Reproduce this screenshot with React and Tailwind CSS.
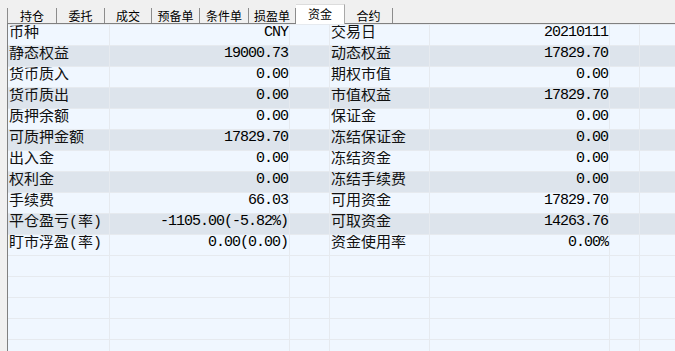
import React from "react";

const left = [
  ["币种", "CNY"],
  ["静态权益", "19000.73"],
  ["货币质入", "0.00"],
  ["货币质出", "0.00"],
  ["质押余额", "0.00"],
  ["可质押金额", "17829.70"],
  ["出入金", "0.00"],
  ["权利金", "0.00"],
  ["手续费", "66.03"],
  ["平仓盈亏(率)", "-1105.00(-5.82%)"],
  ["盯市浮盈(率)", "0.00(0.00)"],
];
const right = [
  ["交易日", "20210111"],
  ["动态权益", "17829.70"],
  ["期权市值", "0.00"],
  ["市值权益", "17829.70"],
  ["保证金", "0.00"],
  ["冻结保证金", "0.00"],
  ["冻结资金", "0.00"],
  ["冻结手续费", "0.00"],
  ["可用资金", "17829.70"],
  ["可取资金", "14263.76"],
  ["资金使用率", "0.00%"],
];

const tabs = [
  { t: "持仓", w: "w-[50px] border-l" },
  { t: "委托", w: "w-[48px]" },
  { t: "成交", w: "w-[47px]" },
  { t: "预备单", w: "w-[48px]" },
  { t: "条件单", w: "w-[49px]" },
  { t: "损盈单", w: "w-[47px]" },
  { t: "资金", w: "w-[49px]", active: true },
  { t: "合约", w: "w-[48px]" },
];

const labelFont = { fontFamily: '"Liberation Mono","Noto Sans CJK SC",monospace' };
const numFont = { fontFamily: '"Liberation Mono","Noto Sans CJK SC",monospace' };

function Row({ i, l, r }) {
  const bg = i % 2 === 1 && l ? "bg-[#dde4ec]" : "bg-[#f0f7ff]";
  return (
    <div className={`flex h-[21px] shrink-0 border-t border-[#e6eaef] ${bg}`}>
      <div
        className="w-[102px] shrink-0 border-r border-[#e6eaef] pl-[1px] text-[15px] leading-[17px] text-[#111] whitespace-nowrap overflow-hidden"
        style={labelFont}
      >
        {l ? l[0] : ""}
      </div>
      <div
        className="w-[180px] shrink-0 border-r border-[#e6eaef] pr-[1px] text-right text-[15px] leading-[16px] tracking-[-1px] text-black whitespace-nowrap"
        style={numFont}
      >
        {l ? l[1] : ""}
      </div>
      <div className="w-[40px] shrink-0 border-r border-[#e6eaef]" />
      <div
        className="w-[100px] shrink-0 border-r border-[#e6eaef] pl-[1px] text-[15px] leading-[17px] text-[#111] whitespace-nowrap overflow-hidden"
        style={labelFont}
      >
        {r ? r[0] : ""}
      </div>
      <div
        className="w-[180px] shrink-0 border-r border-[#e6eaef] pr-[1px] text-right text-[15px] leading-[16px] tracking-[-1px] text-black whitespace-nowrap"
        style={numFont}
      >
        {r ? r[1] : ""}
      </div>
      <div className="w-[30px] shrink-0 border-r border-[#e6eaef]" />
      <div className="flex-1" />
    </div>
  );
}

export default function App() {
  const empties = [0, 1, 2, 3, 4];
  return (
    <div className="w-[675px] h-[351px] overflow-hidden bg-[#f0f0f0] flex flex-col">
      <div className="h-[24px] shrink-0 ml-[7px] flex items-end border-b border-[#808080]">
        {tabs.map((tb) =>
          tb.active ? (
            <div
              key={tb.t}
              className={`${tb.w} h-[20px] -mb-px bg-white border-t border-r border-[#a8a8a8] border-t-[#dcdcdc] flex items-center justify-center text-[12px] text-black`}
              style={{ fontFamily: '"Noto Sans CJK SC",sans-serif' }}
            >
              <span className="leading-[14px] -mt-[1px]">{tb.t}</span>
            </div>
          ) : (
            <div
              key={tb.t}
              className={`${tb.w} h-[15px] border-r border-[#8c8c8c] flex items-center justify-center text-[12px] text-black`}
              style={{ fontFamily: '"Noto Sans CJK SC",sans-serif' }}
            >
              <span className="leading-[14px]">{tb.t}</span>
            </div>
          )
        )}
        <div className="flex-1" />
      </div>
      <div className="flex-1 ml-[7px] border-l border-[#808080] bg-[#f0f7ff] flex flex-col overflow-hidden">
        {left.map((l, i) => (
          <Row key={i} i={i} l={l} r={right[i]} />
        ))}
        {empties.map((e) => (
          <Row key={"e" + e} i={0} l={null} r={null} />
        ))}
      </div>
    </div>
  );
}
